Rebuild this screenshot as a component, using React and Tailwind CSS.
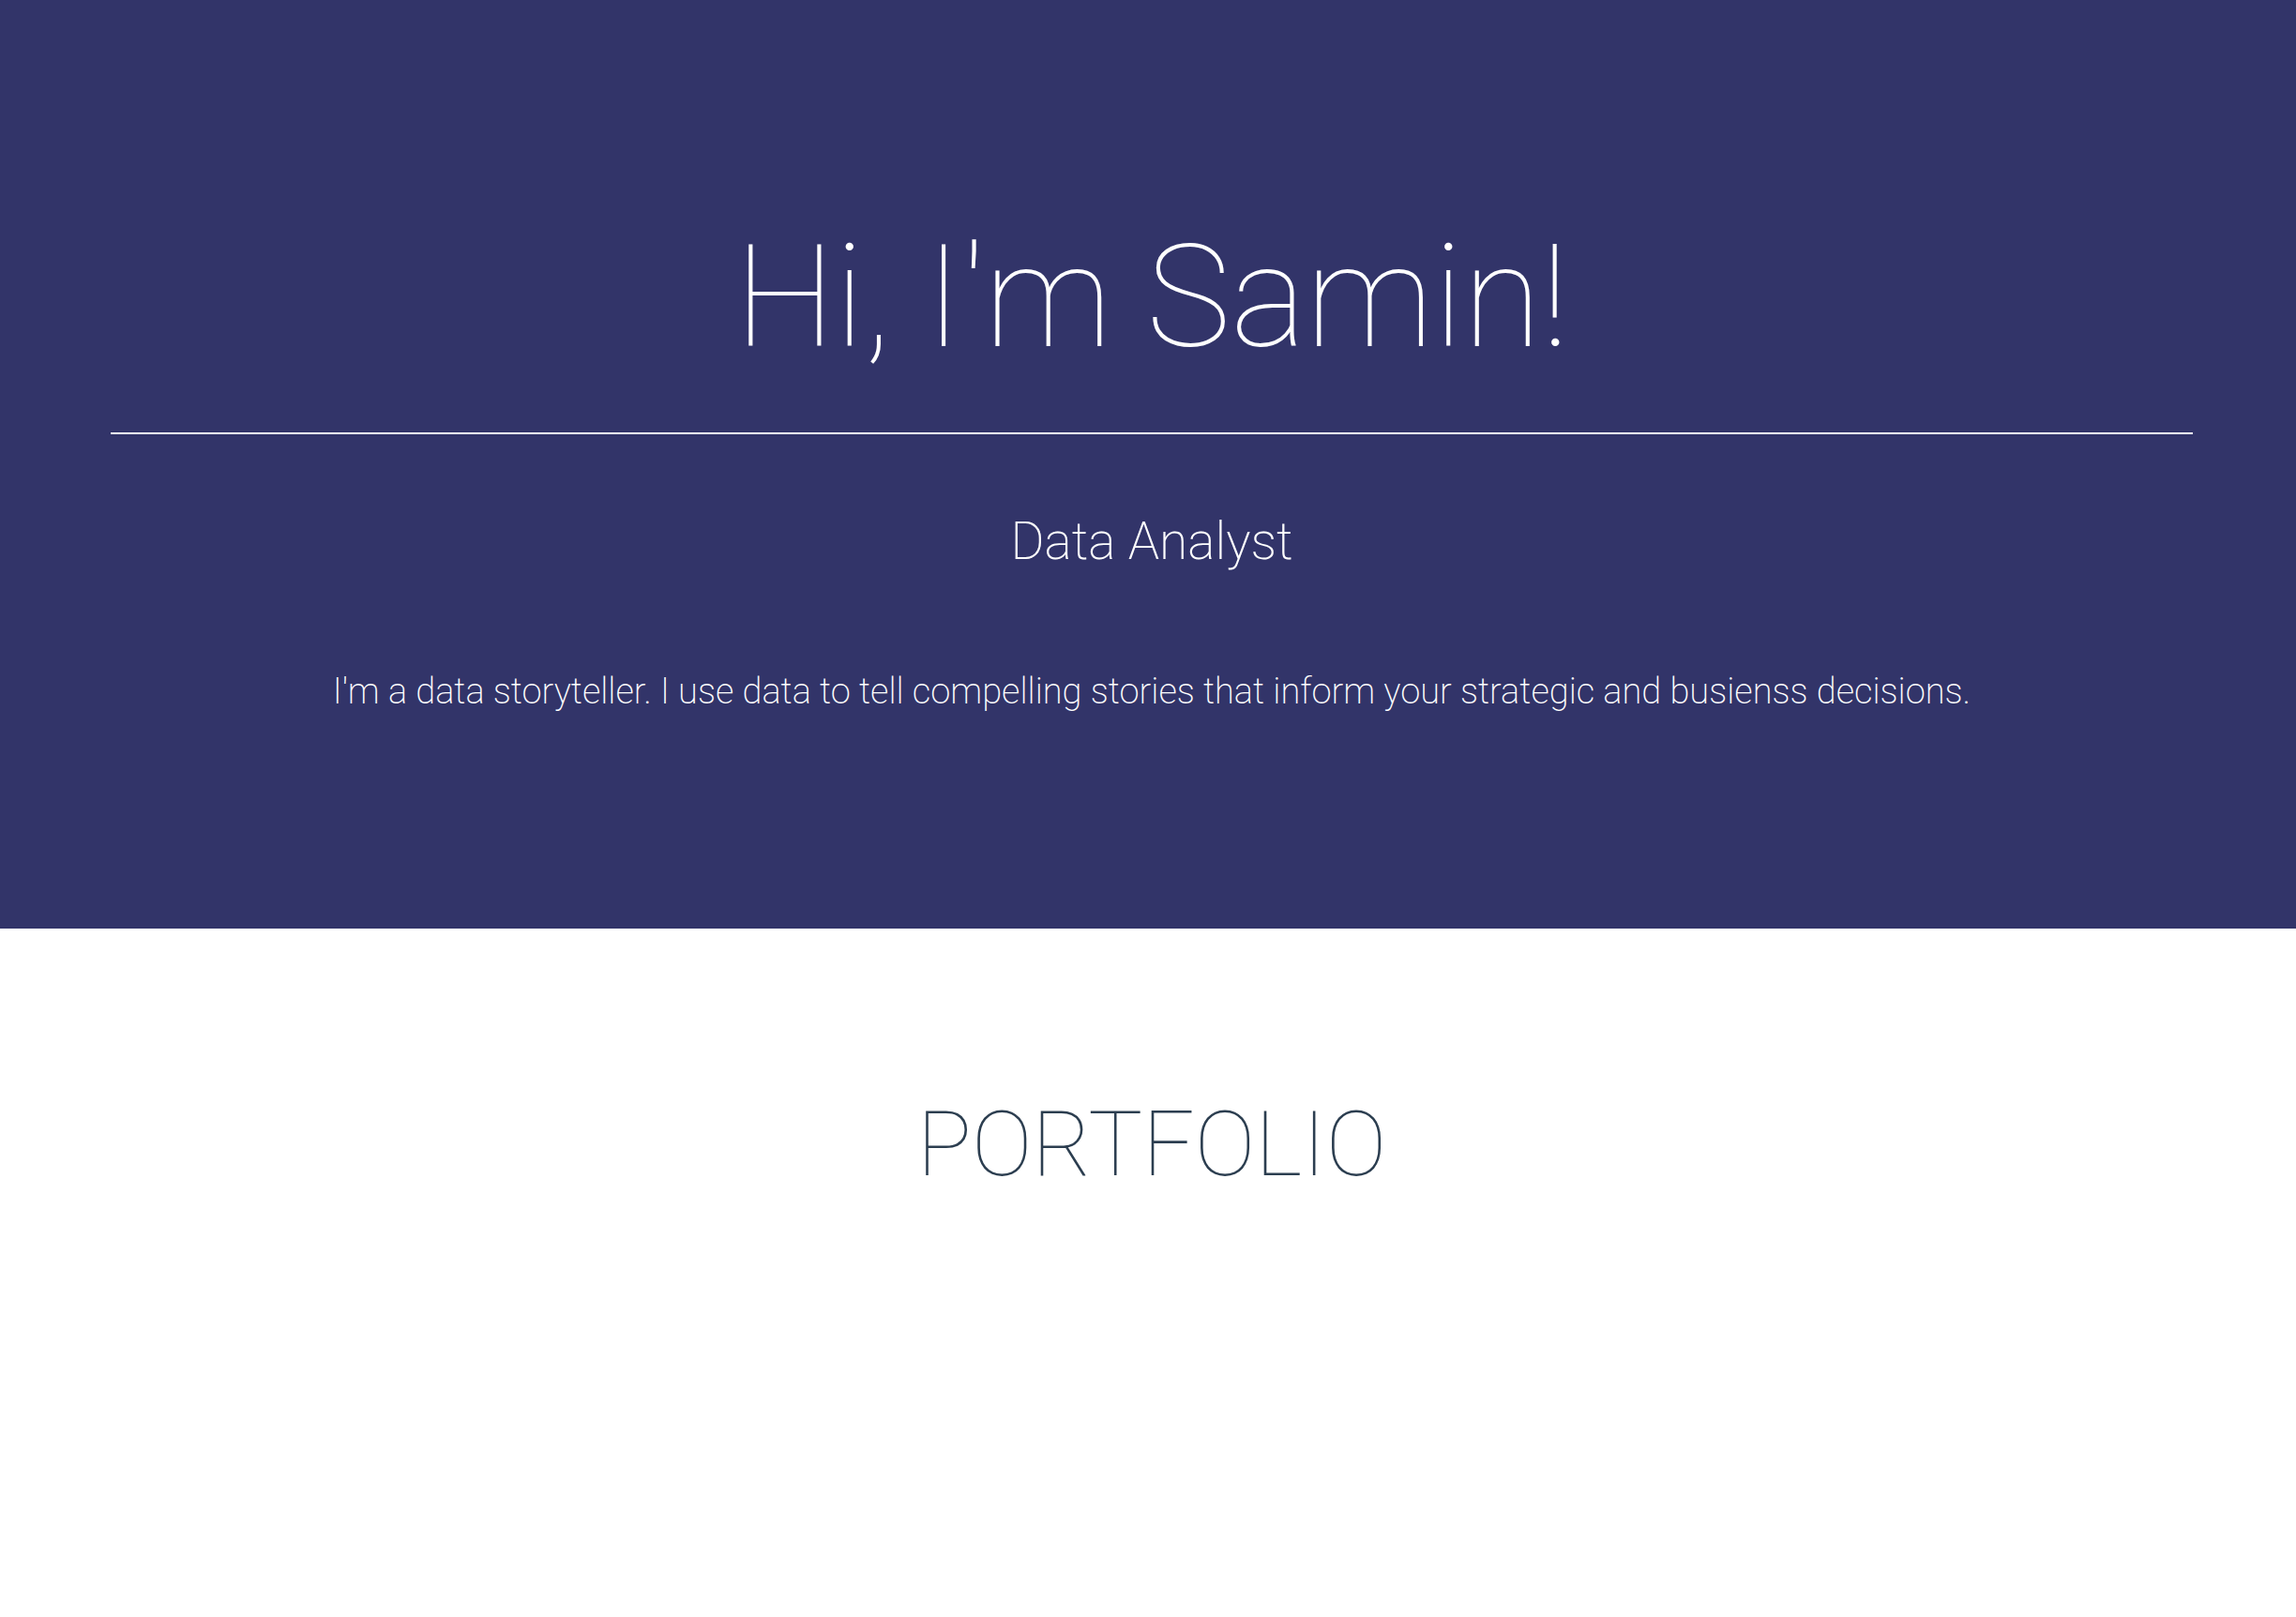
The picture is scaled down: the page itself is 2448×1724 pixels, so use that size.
export default function App() {
  return (
    <div className="min-h-[1724px] bg-white" style={{ fontFamily: "Roboto, 'Noto Sans', sans-serif" }}>
      <header className="h-[990px] bg-[#323469] text-white pl-[118px] pr-[110px] pt-[241px]">
        <h1 className="text-center text-[152px] leading-none font-thin">Hi, I'm Samin!</h1>
        <hr className="mt-[68px] border-0 h-[2px] bg-white" />
        <h2 className="mt-[87px] text-center text-[55px] leading-none font-extralight">Data Analyst</h2>
        <p className="mt-[113px] text-center text-[38px] leading-none font-extralight">
          I'm a data storyteller. I use data to tell compelling stories that inform your strategic and busienss decisions.
        </p>
      </header>
      <section className="pt-[182px] pl-[118px] pr-[110px]">
        <h2 className="text-center text-[97px] leading-none font-thin text-[#2c3e50]">PORTFOLIO</h2>
      </section>
    </div>
  );
}
